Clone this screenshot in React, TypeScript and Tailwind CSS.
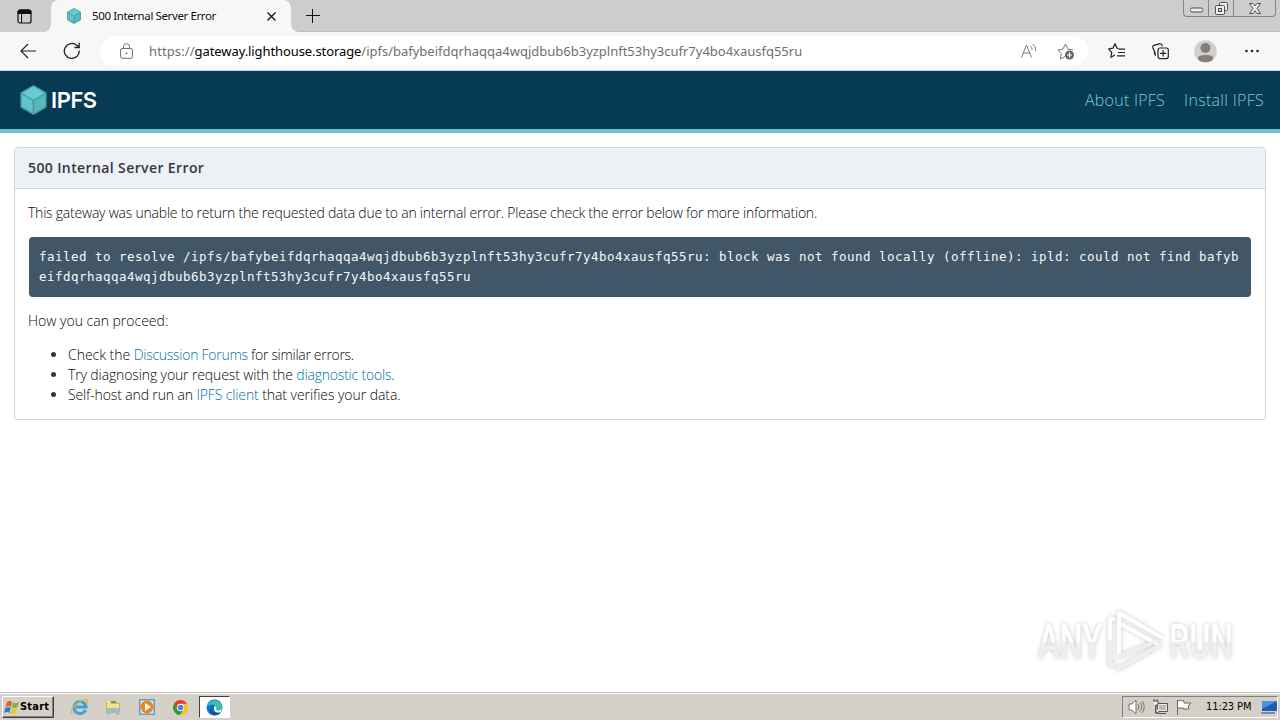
import React from "react";

const Cube = ({ className }: { className: string }) => (
  <svg className={className} viewBox="0 0 28 32">
    <path d="M14 0 28 8v16L14 32 0 24V8z" fill="#469ea2" />
    <path d="M14 1.500 26 8.500 14 15.600 2 8.500z" fill="#6acad1" />
    <path d="M1.500 10 13 16.700v13L1.500 23z" fill="#62c3ca" />
    <path d="M26.500 10 15 16.700v13L26.500 23z" fill="#5ab7be" />
  </svg>
);

const TabStrip = () => (
  <div className="flex h-8 shrink-0 items-start bg-[#cdcdcd] shadow-[inset_0_-1px_0_#bdbdbd]">
    <div className="flex h-8 w-[51px] justify-center rounded-br-lg bg-[#cdcdcd] pt-[9px] pr-[3px]">
      <svg className="h-[15px] w-[15px]" viewBox="0 0 15 15" fill="none" stroke="#111">
        <rect x="1" y="1" width="13" height="13" rx="2" strokeWidth="1.200" />
        <path d="M1 3.500V3a2 2 0 0 1 2-2h9a2 2 0 0 1 2 2v1.500H1z" fill="#111" />
        <path d="M4.500 4v10" />
      </svg>
    </div>
    <div className="relative flex h-8 w-[240px] items-center rounded-t-lg bg-[#f7f7f7] pl-[15px] pr-[15px]">
      <svg className="absolute bottom-0 -left-2 h-2 w-2" viewBox="0 0 8 8"><path d="M8 0v8H0a8 8 0 0 0 8-8" fill="#f7f7f7" /></svg>
      <svg className="absolute -right-2 bottom-0 h-2 w-2" viewBox="0 0 8 8"><path d="M0 0v8h8a8 8 0 0 1-8-8" fill="#f7f7f7" /></svg>
      <Cube className="h-4 w-4" />
      <span className="ml-[10px] flex-1 whitespace-nowrap font-['Noto_Sans',sans-serif] text-[11.500px] tracking-[-0.390px] text-[#111]">500 Internal Server Error</span>
      <svg className="h-[9px] w-[9px]" viewBox="0 0 9 9" stroke="#111" strokeWidth="1.300"><path d="m.5.5 8 8m0-8-8 8" /></svg>
    </div>
    <svg className="mt-2 ml-[14px] h-4 w-4" viewBox="0 0 16 16" stroke="#111" strokeWidth="1"><path d="M1 7.500h14M7.500 1v14" /></svg>
    <div className="mr-1 ml-auto flex h-[17px] w-[93px] rounded-b-[4px] border border-t-0 border-[#858585] text-[#505050]">
      <div className="flex w-[25px] items-center justify-center border-r border-[#858585]">
        <svg className="mt-[3px] h-[6px] w-[13px]" viewBox="0 0 13 6"><rect x=".5" y="1" width="12" height="4" rx="1.500" fill="#eee" stroke="currentColor" /></svg>
      </div>
      <div className="flex w-[25px] items-center justify-center border-r border-[#858585]">
        <svg className="h-[13px] w-[13px]" viewBox="0 0 13 13" fill="#eee" stroke="currentColor"><rect x="4.500" y=".5" width="8" height="8" rx="1" /><rect x=".5" y="3.500" width="9" height="9" rx="1" /><rect x="3.500" y="6.500" width="3" height="3" fill="#cdcdcd" /></svg>
      </div>
      <div className="flex flex-1 items-center justify-center">
        <svg className="h-[11px] w-[12px]" viewBox="0 0 12 11" fill="#eee" stroke="currentColor"><path d="M.5.5h3.500l2 2.500 2-2.500h3.500L8 5.500l3.500 5H8l-2-2.800-2 2.800H.5l3.500-5z" /></svg>
      </div>
    </div>
  </div>
);

const Toolbar = () => (
  <div className="flex h-[39px] shrink-0 items-center border-b border-[#c7d4e4] bg-[#f7f7f7] pl-5">
    <svg className="h-4 w-4" viewBox="0 0 16 16" fill="none" stroke="#222" strokeWidth="1.200"><path d="M16 8H1M8 1 1 8l7 7" /></svg>
    <svg className="ml-[27px] h-[18px] w-[18px]" viewBox="0 0 18 18" fill="none" stroke="#222" strokeWidth="1.300"><path d="M16.300 8.500A7.500 7.500 0 1 1 13 2.700L16 5M16.200.8v4.700h-4.700" /></svg>
    <div className="ml-[19px] flex h-[30px] w-[988px] items-center rounded-full bg-white pl-5">
      <svg className="h-4 w-[13px]" viewBox="0 0 13 16" fill="none" stroke="#707070"><rect x=".6" y="5.500" width="11.800" height="9.800" rx="1.500" /><path d="M3.500 5.500V3.600a3 3 0 0 1 6 0v1.900" /><circle cx="6.500" cy="10.400" r=".9" fill="#707070" stroke="none" /></svg>
      <div className="ml-4 flex-1 whitespace-nowrap pt-px font-['Noto_Sans',sans-serif] text-[13px] text-[#6f6f6f]"><span className="tracking-[0.100px]">https://</span><span className="tracking-[-0.090px] text-black">gateway.lighthouse.storage</span><span className="tracking-[-0.010px]">/ipfs/bafybeifdqrhaqqa4wqjdbub6b3yzplnft53hy3cufr7y4bo4xausfq55ru</span></div>
      <svg className="h-4 w-4" viewBox="0 0 16 16" fill="none" stroke="#777"><path d="M.5 14.500 5.500 2l5 12.500M2.300 10h6.400M9.500 3q2 1.500 1.500 4M11.500 1q4 2.500 3 7" /></svg>
      <svg className="mr-[13px] ml-5 h-[18px] w-[18px]" viewBox="0 0 18 18" fill="none" stroke="#777"><path d="M8 14.500 3.500 17l.8-5.300L.8 8l5-.7L8.500 2l2.500 5.200 5 .8" /><circle cx="12.500" cy="13" r="4.500" fill="#666" stroke="none" /><path d="M10 13h5m-2.500-2.500v5" stroke="#fff" strokeWidth="1.200" /></svg>
    </div>
    <svg className="ml-5 h-4 w-[17px]" viewBox="0 0 17 16" fill="none" stroke="#222" strokeWidth="1.200"><path d="M10.500 5.500 9 5.200 7 .8 4.900 5.200.5 6l3.200 3.300-.7 4.900L7 12M10.500 6.200H17M10 9.500h7M9 12.800h8" /></svg>
    <svg className="ml-[27px] h-[17px] w-[17px]" viewBox="0 0 17 17" fill="none" stroke="#222" strokeWidth="1.200"><path d="M3.500 11 1 5q-.7-2 1-2.700L7.300.8Q9 .4 10 2l.4 1.300M3.500 12.800 2.200 9" /><rect x="6" y="5" width="10.300" height="10.600" rx="2" /><path d="M8 10.300h6.300m-3.200-3.200v6.400" /></svg>
    <svg className="ml-[25px] h-[23px] w-[23px]" viewBox="0 0 23 23"><circle cx="11.500" cy="11.500" r="11.300" fill="#d0cfcd" /><circle cx="11.500" cy="8" r="5" fill="#837e79" /><path d="M4 18q0-3 7.500-3t7.500 3q0 4-7.500 4T4 18" fill="#837e79" /></svg>
    <svg className="ml-7 h-1 w-[14px]" viewBox="0 0 14 4" fill="#222"><circle cx="1.500" cy="2" r="1.300" /><circle cx="7" cy="2" r="1.300" /><circle cx="12.500" cy="2" r="1.300" /></svg>
  </div>
);

const link = "text-[#0070a8]";

const Page = () => (
  <main className="flex min-h-0 flex-1 flex-col bg-white font-['Open_Sans',sans-serif] text-[#34373f]">
    <header className="flex h-[62px] shrink-0 items-center border-b-4 border-[#69c4cd] bg-[#073a53] px-4 pl-5">
      <Cube className="h-[30px] w-[27px]" />
      <span className="ml-1 font-['Inter',sans-serif] text-[22px] leading-none font-semibold tracking-[-0.450px] text-white">IPFS</span>
      <nav className="ml-auto flex gap-[19px] text-base font-light text-[#78cbd6]">
        <a className="tracking-[0.250px]">About IPFS</a>
        <a className="tracking-[0.300px]">Install IPFS</a>
      </nav>
    </header>
    <section className="mx-[14px] mt-[14px] h-[273px] shrink-0 overflow-hidden rounded-[4px] border border-[#ccd6df]">
      <h1 className="flex h-[41px] items-center border-b border-[#ccd6df] bg-[#edf0f4] px-[13px] pb-[2px] text-[14px] font-semibold tracking-[0.390px]">500 Internal Server Error</h1>
      <div className="px-[13px] text-[14px] leading-5 font-light whitespace-nowrap text-[#08090c]">
        <p className="mt-[14px] tracking-[-0.222px]">This gateway was unable to return the requested data due to an internal error. Please check the error below for more information.</p>
        <pre className="mt-[14px] ml-px h-[60px] w-[1222px] rounded-[4px] bg-[#415667] px-[10px] py-[10px] font-['DejaVu_Sans_Mono',monospace] text-[12.500px] leading-5 font-normal tracking-[0.475px] text-[#f2fafa]">{"failed to resolve /ipfs/bafybeifdqrhaqqa4wqjdbub6b3yzplnft53hy3cufr7y4bo4xausfq55ru: block was not found locally (offline): ipld: could not find bafyb\neifdqrhaqqa4wqjdbub6b3yzplnft53hy3cufr7y4bo4xausfq55ru"}</pre>
        <p className="mt-[14px] tracking-[0px]">How you can proceed:</p>
        <ul className="mt-[14px] list-disc pl-10 marker:text-[#34373f]">
          <li className="tracking-[-0.270px]"><span className="tracking-[-0.030px]">Check the </span><a className={link}>Discussion Forums</a><span className="tracking-[-0.300px]"> for similar errors.</span></li>
          <li className="tracking-[-0.120px]">Try diagnosing your request with the <a className={`${link} tracking-[-0.200px]`}>diagnostic tools</a>.</li>
          <li className="tracking-[-0.130px]">Self-host and run an <a className={link}>IPFS client</a><span className="tracking-[-0.060px]"> that verifies your data.</span></li>
        </ul>
      </div>
    </section>
    <div className="mt-auto mr-[42px] mb-[18px] flex h-[66px] items-center self-end font-['Roboto',sans-serif] [filter:drop-shadow(0_0_2px_rgba(0,0,0,0.22))]">
      <svg className="h-[66px] w-[202px] overflow-visible" viewBox="0 0 202 66" fill="url(#mark)">
        <defs><linearGradient id="mark" x1="0" y1="0" x2="0" y2="66" gradientUnits="userSpaceOnUse"><stop offset="0.5" stopColor="#fff" /><stop offset="0.52" stopColor="#efefef" /></linearGradient></defs>
        <text x="2" y="50" fontSize="48" fontWeight="500" textLength="64" lengthAdjust="spacingAndGlyphs">ANY</text>
        <text x="133" y="50" fontSize="48" fontWeight="500" textLength="64" lengthAdjust="spacingAndGlyphs">RUN</text>
        <g fill="none" stroke="#fff" strokeWidth="4" strokeLinejoin="round" strokeLinecap="round"><path d="M83 48V5l42 24" /><path d="M83 15l38 21" /><path d="M78 11h-4v22" /><path d="M74 33v24l4-1M83 48l38-15M82 61l42-24" stroke="#efefef" /></g>
      </svg>
    </div>
  </main>
);

const Taskbar = () => (
  <footer className="flex h-[28px] shrink-0 items-center border-t border-[#bcb8b0] bg-[#d4d0c8] pt-px font-['DejaVu_Sans_Condensed','DejaVu_Sans',sans-serif] text-[11px] text-black shadow-[inset_0_1px_0_#fff]">
    <div className="ml-[2px] flex h-[22px] w-[52px] items-center border border-t-white border-r-[#404040] border-b-[#404040] border-l-white pl-px shadow-[inset_-1px_-1px_0_#808080]">
      <svg className="h-[15px] w-4 shrink-0" viewBox="0 0 16 15"><path d="M3 2q3-2 5 0L7 7Q4 5 1.500 7z" fill="#e75b25" /><path d="M9 2.500q3 1.600 6-.4l-1.500 5q-3 2-5.500.4z" fill="#79b83a" /><path d="M1.300 8Q4 6 6.700 8l-1.400 5Q3 11 0 13z" fill="#2d80d2" /><path d="M7.700 8.500q3 1.600 5.600-.4l-1.400 5q-3 2-5.600.4z" fill="#f5c52c" /></svg>
      <span className="pt-px font-bold tracking-[0.200px]">Start</span>
    </div>
    <svg className="ml-[17px] h-[18px] w-[18px]" viewBox="0 0 18 18" fill="none"><path d="M14.500 12a6 6 0 1 1 .5-3H5" stroke="#3aa2df" strokeWidth="3" /><path d="M2 15C-1 17-.5 10 7 5s12-4 8.500 1" stroke="#e3b43b" strokeWidth="1.300" /></svg>
    <svg className="ml-4 h-[17px] w-[16px]" viewBox="0 0 16 17"><path d="M1 3h5l1 1h8v10H1z" fill="#d6ae4d" /><path d="M2 2h4v3h8v6H2z" fill="#f7e08c" /><path d="M6 3h5" stroke="#51a85b" strokeWidth="2" /><path d="M2 9h12v7h-3v-4H5v4H2z" fill="#86c4e8" /></svg>
    <svg className="ml-[18px] h-4 w-4" viewBox="0 0 16 16"><path d="M0 0h16v16H0z" fill="#5e9ccd" /><path d="M1.500 1.500h13v13h-13z" fill="#d9ebf7" /><circle cx="8" cy="8" r="6.500" fill="#ef8417" /><path d="m6 4 6 4-6 4z" fill="#fff" /></svg>
    <svg className="ml-[18px] h-[15px] w-[15px]" viewBox="0 0 16 16"><circle cx="8" cy="8" r="8" fill="#fbc116" /><path d="M1.100 4A8 8 0 0 1 14.900 4H8L4.500 10z" fill="#df3c30" /><path d="M1.100 4A8 8 0 0 0 7 16l4.500-6H4.500z" fill="#279b4c" /><circle cx="8" cy="8" r="3.900" fill="#fff" /><circle cx="8" cy="8" r="3" fill="#4285f4" /></svg>
    <div className="ml-[11px] flex h-[22px] w-[31px] items-center justify-center border border-t-[#404040] border-r-white border-b-white border-l-[#404040] bg-white">
      <svg className="h-[17px] w-[17px]" viewBox="0 0 17 17"><circle cx="8.500" cy="8.500" r="8" fill="#1675c5" /><path d="M.7 8A8 8 0 0 1 16.500 8c0 3-4 4-6.500 2 1-5-6-6-9.300-2" fill="#40bfa4" /><path d="M1 6a8 8 0 0 1 10-5Q6 2 1 8z" fill="#2ba8dc" /><path d="M7 7q-3 6 4 7 2 .2 4-1-3 4-8 3-6-4 0-9" fill="#114f96" /><path d="M9 7q2 1 1 3 2 3 6 0l-1 3q-6 2-7-3Q7.500 8 9 7" fill="#fff" /></svg>
    </div>
    <div className="mr-[2px] ml-auto flex h-[22px] w-[156px] items-center border border-t-[#808080] border-r-white border-b-white border-l-[#808080] pl-[5px]">
      <svg className="h-4 w-[17px]" viewBox="0 0 17 16" fill="#fff" stroke="#777"><path d="M1 5h3l4-4v14l-4-4H1z" /><path d="M10 5q2 3 0 6M12 3.500q3.500 4.500 0 9M14 2q4.500 6 0 12" fill="none" /></svg>
      <svg className="ml-[7px] h-4 w-4" viewBox="0 0 16 16" fill="#eee" stroke="#555"><path d="M5.500 4.500h10v8h-10zM7 14.500h7" /><path d="M1 2h5v4H4v8h3M2 0v2m3-2v2M3.500 6v8H7" /><path d="M7 6h7v5H7z" fill="#bbb" stroke="none" /></svg>
      <svg className="ml-[8px] h-4 w-4" viewBox="0 0 16 16" fill="#fff" stroke="#666"><path d="M1.500 1v15M1.500 2q4-1.500 6.500 0v2h7l-3 3 1 3H7.500V9h-6" /></svg>
      <span className="ml-[14px] flex-1 whitespace-nowrap pt-px tracking-[-0.100px]">11:23 PM</span>
      <svg className="h-4 w-4" viewBox="0 0 16 16"><path d="M1 2h15v10H1z" fill="#2459b0" /><path d="M1 2h15L1 10z" fill="#4c91df" /><path d="M0 13h14v2H0z" fill="#738caf" /></svg>
    </div>
  </footer>
);

export default function App() {
  return (
    <div className="flex h-[720px] w-[1280px] flex-col overflow-hidden bg-white">
      <TabStrip />
      <Toolbar />
      <Page />
      <Taskbar />
    </div>
  );
}
